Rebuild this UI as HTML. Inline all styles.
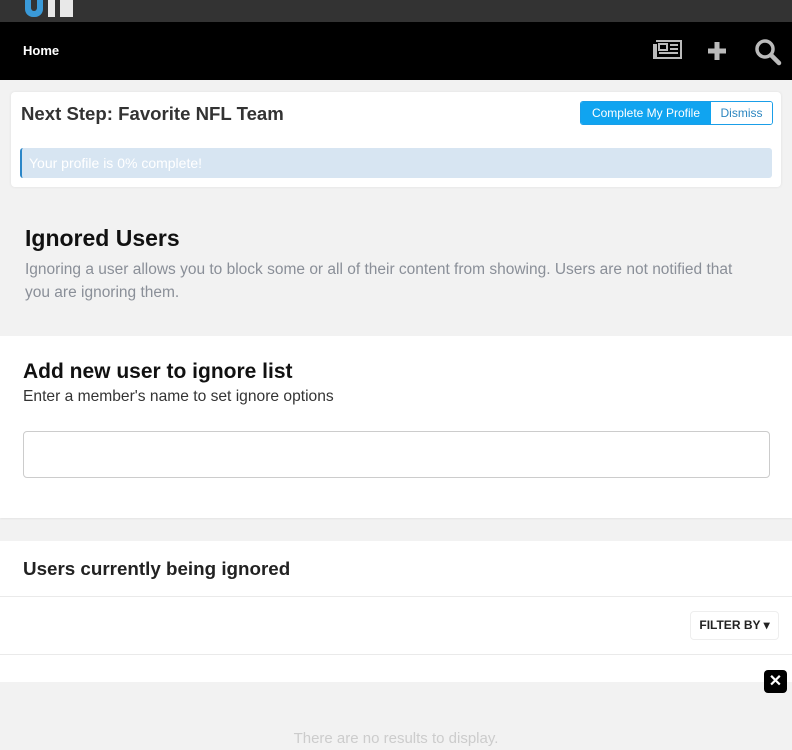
<!DOCTYPE html>
<html><head><meta charset="utf-8"><style>
*{box-sizing:border-box;margin:0;padding:0}
body{width:792px;height:750px;overflow:hidden;background:#f2f2f2;font-family:"Liberation Sans",sans-serif;position:relative}
.abs{position:absolute}
</style></head><body>
<div class="abs" style="left:0;top:0;width:792px;height:22px;background:#333"></div>
<div class="abs" style="left:25px;top:0;width:18px;height:17px;background:#3a9ad9;border-radius:0 0 8px 8px"></div>
<div class="abs" style="left:31px;top:0;width:6px;height:11px;background:#333;border-radius:0 0 3px 3px"></div>
<div class="abs" style="left:48px;top:0;width:7px;height:17px;background:#e8e8e8"></div>
<div class="abs" style="left:60px;top:0;width:13px;height:17px;background:#e8e8e8"></div>
<div class="abs" style="left:0;top:22px;width:792px;height:58px;background:#000"></div>
<div class="abs" style="left:23px;top:43px;color:#fff;font-weight:bold;font-size:13px">Home</div>
<svg class="abs" style="left:651px;top:39px" width="32" height="22" viewBox="0 0 32 22"><g fill="none" stroke="#bbb" stroke-width="2"><path d="M5 2h25v17H3V6h2v13"/><rect x="8" y="5" width="8" height="6"/><path d="M19 6h8M19 10h8M8 14h19"/></g></svg>
<svg class="abs" style="left:706px;top:40px" width="22" height="22"><path d="M11 2v18M2 11h18" stroke="#bbb" stroke-width="5"/></svg>
<svg class="abs" style="left:754px;top:38px" width="28" height="28"><circle cx="11" cy="11" r="8" fill="none" stroke="#bbb" stroke-width="3.5"/><path d="M17 17l8 8" stroke="#bbb" stroke-width="4.5" stroke-linecap="round"/></svg>
<div class="abs" style="left:11px;top:92px;width:770px;height:95px;background:#fff;border-radius:4px;box-shadow:0 0 3px rgba(0,0,0,.08)"></div>
<div class="abs" style="left:21px;top:103px;font-size:18.6px;font-weight:bold;color:#333">Next Step: Favorite NFL Team</div>
<div class="abs" style="left:580px;top:101px;width:193px;height:24px;border:1px solid #1a9ee8;border-radius:3px;overflow:hidden;font-size:12px;display:flex">
<div style="width:130px;background:#10a4f0;color:#fff;text-align:center;line-height:22px">Complete My Profile</div>
<div style="flex:1;background:#fff;color:#2c86c0;text-align:center;line-height:22px">Dismiss</div></div>
<div class="abs" style="left:20px;top:148px;width:752px;height:30px;background:#d7e5f2;border-left:2px solid #2a86c8;border-radius:3px;color:#fff;font-size:14px;line-height:30px;padding-left:7px">Your profile is 0% complete!</div>
<div class="abs" style="left:25px;top:225px;font-size:23px;font-weight:bold;color:#111">Ignored Users</div>
<div class="abs" style="left:25px;top:258px;width:745px;font-size:15.5px;line-height:23px;color:#8a8f98">Ignoring a user allows you to block some or all of their content from showing. Users are not notified that<br>you are ignoring them.</div>
<div class="abs" style="left:0;top:336px;width:792px;height:182px;background:#fff;box-shadow:0 1px 2px rgba(0,0,0,.06)"></div>
<div class="abs" style="left:23px;top:360px;font-size:21px;font-weight:bold;color:#111">Add new user to ignore list</div>
<div class="abs" style="left:23px;top:388px;font-size:15.6px;color:#333">Enter a member's name to set ignore options</div>
<div class="abs" style="left:23px;top:431px;width:747px;height:47px;border:1px solid #ccc;border-radius:4px;background:#fff"></div>
<div class="abs" style="left:0;top:541px;width:792px;height:141px;background:#fff"></div>
<div class="abs" style="left:0;top:596px;width:792px;height:1px;background:#eaeaea"></div>
<div class="abs" style="left:0;top:654px;width:792px;height:1px;background:#eaeaea"></div>
<div class="abs" style="left:23px;top:558px;font-size:18.8px;font-weight:bold;color:#222">Users currently being ignored</div>
<div class="abs" style="left:690px;top:611px;width:89px;height:29px;border:1px solid #eee;border-radius:4px;font-size:12px;font-weight:bold;color:#222;line-height:27px;text-align:center">FILTER BY ▾</div>
<div class="abs" style="left:764px;top:670px;width:23px;height:23px;background:#000;border-radius:4px;color:#fff;font-weight:bold;font-size:16px;text-align:center;line-height:23px">✕</div>
<div class="abs" style="left:0;top:730px;width:792px;text-align:center;font-size:15px;color:#ccc">There are no results to display.</div>
</body></html>
